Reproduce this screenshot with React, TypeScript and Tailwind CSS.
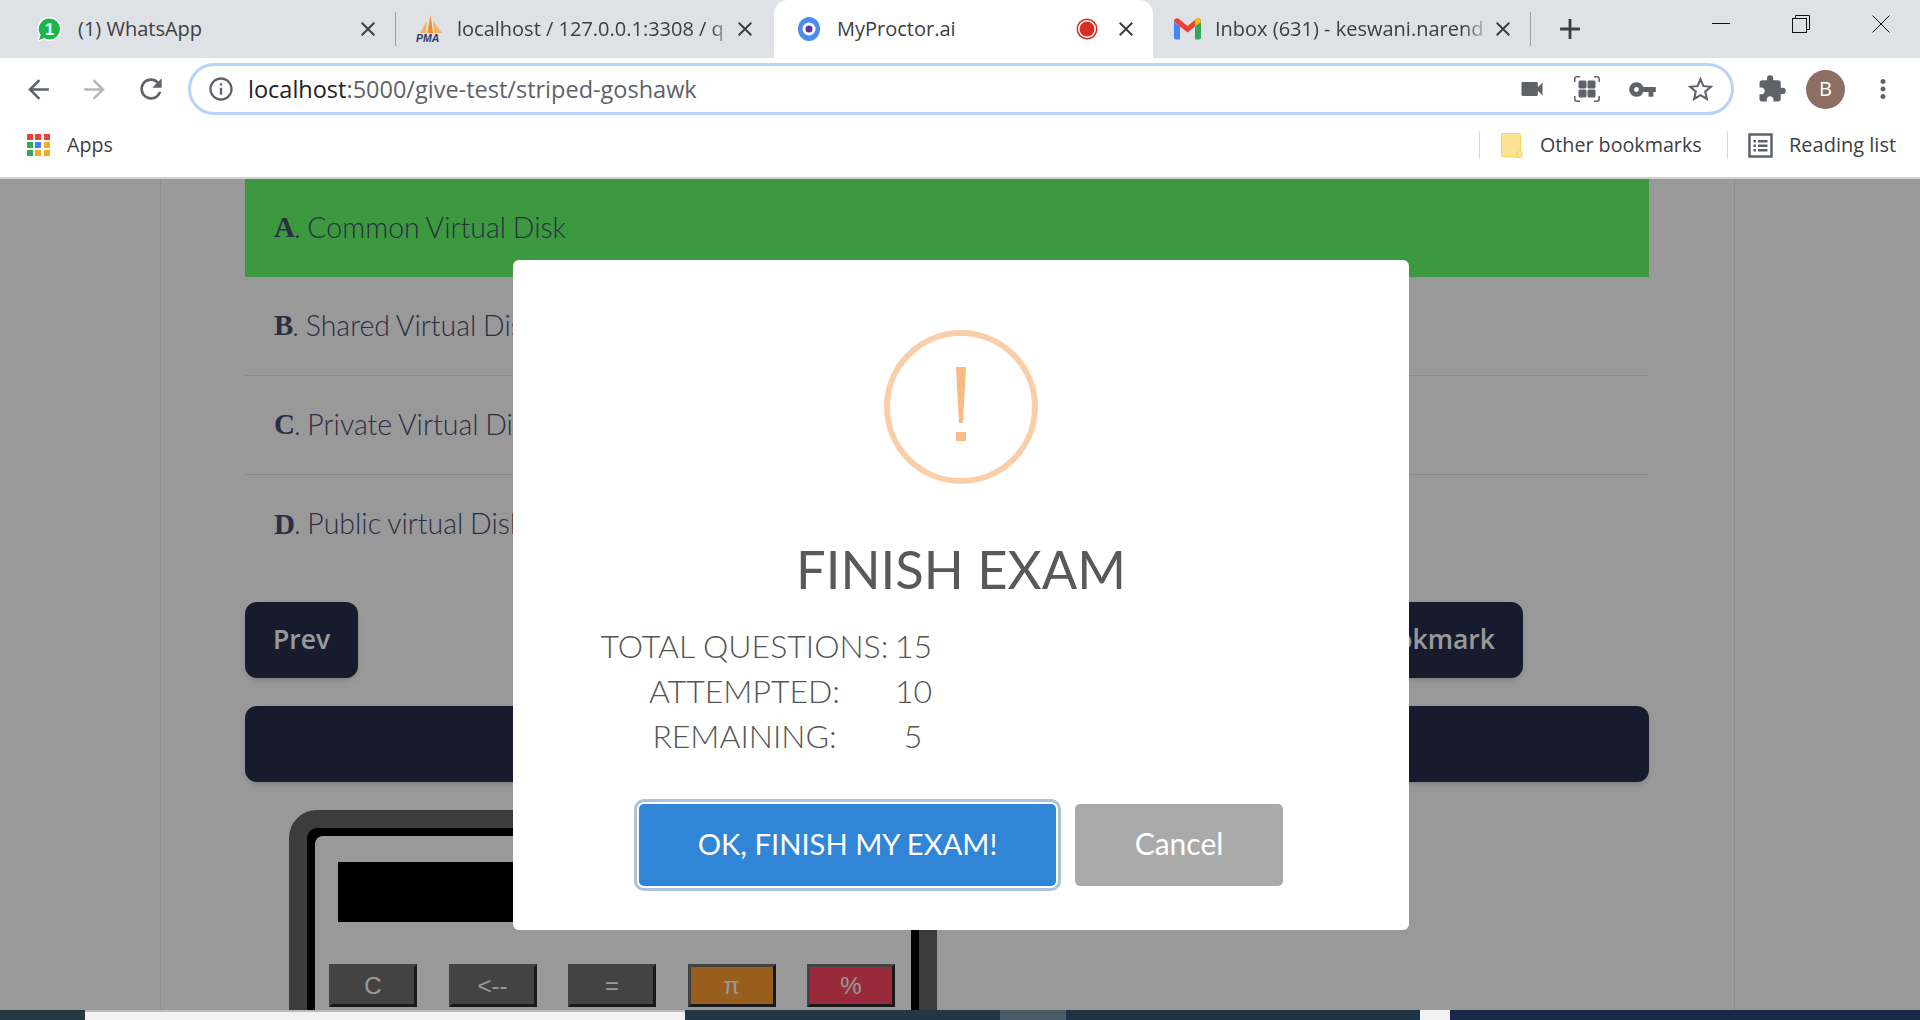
import React from "react";
import {
  MdArrowBack,
  MdArrowForward,
  MdRefresh,
  MdInfoOutline,
  MdVideocam,
  MdVpnKey,
  MdStarBorder,
  MdExtension,
  MdMoreVert,
  MdClose,
  MdAdd,
} from "react-icons/md";

const chromeFont = "font-['Open_Sans','Noto_Sans',sans-serif]";

function WhatsAppIcon() {
  return (
    <svg width="26" height="27" viewBox="0 0 26 27">
      <path d="M13.500 1a12 12 0 0 1 0 24c-2 0-3.800-.5-5.400-1.400L.8 26l2.400-6.400A12 12 0 0 1 13.500 1z" fill="#fff" />
      <path d="M13.500 2.500a10.500 10.500 0 0 1 0 21c-1.900 0-3.700-.5-5.200-1.400L3 24l1.700-5A10.500 10.500 0 0 1 13.500 2.500z" fill="#16b84a" />
      <text x="13.500" y="19" textAnchor="middle" fontSize="17" fontWeight="700" fill="#fff" fontFamily="Liberation Sans">1</text>
    </svg>
  );
}

function PmaIcon() {
  return (
    <svg width="28" height="28" viewBox="0 0 28 28">
      <path d="M4 18 L11 6 L10 18 Z" fill="#f7b35c" />
      <path d="M11.500 18 L14.500 0 L17 18 Z" fill="#f28c28" />
      <path d="M18 18 L17 6 L26 18 Z" fill="#f7b35c" />
      <text x="0" y="27" fontSize="10.500" fontWeight="700" fontStyle="italic" fill="#2b3a6b" fontFamily="Liberation Sans">PMA</text>
    </svg>
  );
}

function ProctorIcon() {
  return (
    <svg width="24" height="24" viewBox="0 0 24 24">
      <ellipse cx="12" cy="12" rx="11" ry="12" fill="#4a8cf0" />
      <circle cx="12" cy="12" r="6.500" fill="#fff" />
      <circle cx="12" cy="12" r="3.500" fill="#5b2fa8" />
    </svg>
  );
}

function RecIcon() {
  return (
    <svg width="22" height="22" viewBox="0 0 22 22">
      <circle cx="11" cy="11" r="10.500" fill="#d93025" />
      <circle cx="11" cy="11" r="9" fill="#fff" />
      <circle cx="11" cy="11" r="7.500" fill="#d93025" />
    </svg>
  );
}

function GmailIcon() {
  return (
    <svg width="27" height="22" viewBox="0 0 27 22">
      <path d="M0 4 L0 19.500 A2 2 0 0 0 2 21.500 L6 21.500 L6 8.500 Z" fill="#4285f4" />
      <path d="M21 8.500 L21 21.500 L25 21.500 A2 2 0 0 0 27 19.500 L27 4 Z" fill="#34a853" />
      <path d="M0 3.500 C0 .5 3 -.5 5 1 L13.500 8 L22 1 C24 -.5 27 .5 27 3.500 L21 8.500 L13.500 14.500 L6 8.500 Z" fill="#ea4335" />
      <path d="M21 8.500 L21 2.500 L22 1 C24 -.5 27 .5 27 3.500 Z" fill="#fbbc04" />
    </svg>
  );
}

function TabClose() {
  return <MdClose size={24} className="text-[#3c4043] shrink-0" />;
}

function AppsIcon() {
  const colors = ["#ef4136", "#ef4136", "#ef4136", "#34a853", "#4285f4", "#f9a825", "#34a853", "#f9a825", "#f9a825"];
  return (
    <div className="grid grid-cols-3 gap-[2px] w-[23px]">
      {colors.map((c, i) => (
        <svg key={i} width="6" height="6" viewBox="0 0 6 6">
          <rect width="6" height="6" fill={c} />
        </svg>
      ))}
    </div>
  );
}

function FolderIcon() {
  return (
    <svg width="22" height="25" viewBox="0 0 22 25">
      <rect x=".5" y=".5" width="19" height="23.500" rx="1" fill="#fde293" stroke="#f9d35c" />
      <rect x="16" y="17" width="5" height="7.500" rx="1.500" fill="#fde293" stroke="#f9d35c" />
    </svg>
  );
}

function ReadingIcon() {
  return (
    <svg width="25" height="25" viewBox="0 0 25 25" fill="none">
      <rect x="1.500" y="1.500" width="22" height="22" stroke="#5f6368" strokeWidth="2.500" />
      <rect x="5.500" y="7" width="2.500" height="2.500" fill="#5f6368" />
      <rect x="5.500" y="11.500" width="2.500" height="2.500" fill="#5f6368" />
      <rect x="5.500" y="16" width="2.500" height="2.500" fill="#5f6368" />
      <rect x="10" y="7" width="9.500" height="2.500" fill="#5f6368" />
      <rect x="10" y="11.500" width="9.500" height="2.500" fill="#5f6368" />
      <rect x="10" y="16" width="9.500" height="2.500" fill="#5f6368" />
    </svg>
  );
}

function QrIcon() {
  return (
    <svg width="26" height="26" viewBox="0 0 26 26" fill="none">
      <path d="M6 .8H3a2.200 2.200 0 0 0-2.200 2.200V6M20 .8h3a2.200 2.200 0 0 1 2.200 2.200V6M6 25.200H3A2.200 2.200 0 0 1 .8 23V20M20 25.200h3a2.200 2.200 0 0 0 2.200-2.200V20" stroke="#5f6368" strokeWidth="1.500" />
      <rect x="4.500" y="4.500" width="8" height="8" rx="1.500" fill="#5f6368" />
      <rect x="13.500" y="4.500" width="8" height="8" rx="1.500" fill="#5f6368" />
      <rect x="4.500" y="13.500" width="8" height="8" rx="1.500" fill="#5f6368" />
      <rect x="13.500" y="13.500" width="8" height="8" rx="1.500" fill="#5f6368" />
    </svg>
  );
}

function WinMin() {
  return (
    <svg width="18" height="18" viewBox="0 0 18 18">
      <path d="M0 8.500H18" stroke="#111" strokeWidth="1" />
    </svg>
  );
}
function WinRestore() {
  return (
    <svg width="18" height="18" viewBox="0 0 18 18" fill="none">
      <rect x=".5" y="3.500" width="14" height="14" stroke="#111" />
      <path d="M3.500 3.500V.5H17.500V14.500H14.500" stroke="#111" />
    </svg>
  );
}
function WinClose() {
  return (
    <svg width="18" height="18" viewBox="0 0 18 18">
      <path d="M.5.5L17.500 17.500M17.500.5L.5 17.500" stroke="#111" strokeWidth="1" />
    </svg>
  );
}

function TabStrip() {
  return (
    <div className={`h-[58px] bg-[#dee1e6] flex items-stretch shrink-0 ${chromeFont}`}>
      <div className="w-[395px] flex items-center pl-[36px] shrink-0">
        <WhatsAppIcon />
        <span className="ml-[16px] text-[20px] text-[#3c4043] w-[278px] shrink-0">(1) WhatsApp</span>
        <TabClose />
      </div>
      <div className="w-px my-[12px] bg-[#9aa0a6] shrink-0" />
      <div className="w-[378px] flex items-center pl-[20px] shrink-0">
        <PmaIcon />
        <span className="ml-[13px] text-[20px] text-[#3c4043] w-[276px] shrink-0 whitespace-nowrap overflow-hidden [mask-image:linear-gradient(to_right,black_92%,transparent)]">localhost / 127.0.0.1:3308 / q</span>
        <TabClose />
      </div>
      <div className="w-[379px] flex items-center pl-[23px] shrink-0 bg-white rounded-t-[14px]">
        <ProctorIcon />
        <span className="ml-[16px] text-[20px] text-[#3c4043] w-[239px] shrink-0">MyProctor.ai</span>
        <RecIcon />
        <span className="w-[16px]" />
        <TabClose />
      </div>
      <div className="w-[377px] flex items-center pl-[21px] shrink-0">
        <GmailIcon />
        <span className="ml-[14px] text-[20px] text-[#3c4043] w-[276px] shrink-0 whitespace-nowrap overflow-hidden [mask-image:linear-gradient(to_right,black_90%,transparent)]">Inbox (631) - keswani.narend</span>
        <TabClose />
      </div>
      <div className="w-px my-[12px] bg-[#9aa0a6] shrink-0" />
      <div className="flex items-center pl-[22px] shrink-0">
        <MdAdd size={34} className="text-[#3c4043]" />
      </div>
      <div className="flex-1 flex justify-end items-start pt-[15px] pr-[30px] gap-[62px]">
        <WinMin />
        <WinRestore />
        <WinClose />
      </div>
    </div>
  );
}

function Toolbar() {
  return (
    <div className={`h-[62px] bg-white flex items-center shrink-0 pl-[23px] ${chromeFont}`}>
      <MdArrowBack size={31} className="text-[#5f6368] shrink-0" />
      <MdArrowForward size={31} className="text-[#b4b7bb] shrink-0 ml-[25px]" />
      <MdRefresh size={32} className="text-[#5f6368] shrink-0 ml-[25px]" />
      <div className="ml-[21px] w-[1546px] h-[52px] border-[3px] border-[#b7d4f8] rounded-full flex items-center pl-[16px] pr-[15px] shrink-0">
        <MdInfoOutline size={28} className="text-[#5f6368] shrink-0" />
        <span className="ml-[13px] pt-px text-[23.500px] text-[#5f6368] flex-1">
          <span className="text-[#202124]">localhost</span>:5000/give-test/striped-goshawk
        </span>
        <div className="flex items-center gap-[28px]">
          <MdVideocam size={28} className="text-[#5f6368]" />
          <QrIcon />
          <MdVpnKey size={29} className="text-[#5f6368]" />
          <MdStarBorder size={31} className="text-[#5f6368]" />
        </div>
      </div>
      <MdExtension size={30} className="text-[#5f6368] shrink-0 ml-[23px]" />
      <div className="ml-[19px] w-[39px] h-[39px] rounded-full bg-[#8d6e63] text-white text-[20px] flex items-center justify-center shrink-0">B</div>
      <MdMoreVert size={30} className="text-[#5f6368] shrink-0 ml-[23px]" />
    </div>
  );
}

function BookmarksBar() {
  return (
    <div className={`h-[59px] bg-white flex items-center shrink-0 pl-[27px] pb-[7px] border-b-2 border-[#d0d0d0] ${chromeFont}`}>
      <AppsIcon />
      <span className="ml-[17px] text-[19.700px] text-[#3c4043]">Apps</span>
      <div className="ml-auto w-px h-[28px] bg-[#d5d7da]" />
      <span className="ml-[21px]"><FolderIcon /></span>
      <span className="ml-[17px] text-[19.700px] text-[#3c4043] w-[187px] whitespace-nowrap">Other bookmarks</span>
      <div className="w-px h-[28px] bg-[#d5d7da]" />
      <span className="ml-[20px]"><ReadingIcon /></span>
      <span className="ml-[16px] text-[20px] text-[#3c4043] w-[131px] whitespace-nowrap">Reading list</span>
    </div>
  );
}

function OptionRow({ letter, text, tone }: { letter: string; text: string; tone: string }) {
  return (
    <div className={`flex items-center shrink-0 pl-[29px] text-[#4a4d72] ${tone}`}>
      <b className="font-['Liberation_Serif',serif] font-bold text-[29px]">{letter}</b>
      <span className="-ml-[1px] font-['Lato',sans-serif] font-light text-[28.500px] [word-spacing:-1px] -translate-y-px">. {text}</span>
    </div>
  );
}

function CalcKey({ label, tone }: { label: string; tone: string }) {
  return (
    <button className={`w-[88px] h-[43px] shrink-0 border-[3px] border-t-[#717171] border-l-[#717171] border-r-[#2b2b2b] border-b-[#2b2b2b] text-white text-[24px] font-['Liberation_Sans',sans-serif] leading-none ${tone}`}>
      {label}
    </button>
  );
}

function Calculator() {
  return (
    <div className="mt-[28px] ml-[44px] w-[648px] h-[520px] shrink-0 border-[18px] border-[#646464] rounded-[28px] bg-black p-[8px]">
      <div className="h-full bg-white rounded-[8px] pt-[26px] px-[14px]">
        <div className="ml-[9px] w-[550px] h-[60px] bg-black" />
        <div className="mt-[42px] flex gap-[31.500px]">
          <CalcKey label="C" tone="bg-[#717171]" />
          <CalcKey label="<--" tone="bg-[#717171]" />
          <CalcKey label="=" tone="bg-[#717171]" />
          <CalcKey label="π" tone="bg-[#ff9b32]" />
          <CalcKey label="%" tone="bg-[#ff4665]" />
        </div>
      </div>
    </div>
  );
}

function ExamPage() {
  const btn = "h-[76px] px-[28px] bg-[#252d4d] text-white rounded-[12px] text-[26.500px] font-semibold font-['Open_Sans',sans-serif] shadow-md";
  return (
    <div className="ml-[160px] w-[1575px] h-full border-x border-[#ececec] pl-[84px] pr-[85px] flex flex-col">
      <OptionRow letter="A" text="Common Virtual Disk" tone="h-[98px] bg-[#65ff6b]" />
      <OptionRow letter="B" text="Shared Virtual Disk" tone="h-[99px] border-b border-[#e6e6e6]" />
      <OptionRow letter="C" text="Private Virtual Disk" tone="h-[99px] border-b border-[#e6e6e6]" />
      <OptionRow letter="D" text="Public virtual Disk" tone="h-[99px]" />
      <div className="mt-[28px] flex justify-between pr-[126px] shrink-0">
        <button className={btn}>Prev</button>
        <button className={btn}>Bookmark</button>
      </div>
      <div className="mt-[28px] h-[76px] shrink-0 bg-[#252d4d] rounded-[12px] shadow-md" />
      <Calculator />
    </div>
  );
}

function FinishModal() {
  const rows: [string, string][] = [
    ["TOTAL QUESTIONS:", "15"],
    ["ATTEMPTED:", "10"],
    ["REMAINING:", "5"],
  ];
  return (
    <div className="absolute inset-0 bg-black/40">
      <div className="absolute left-[513px] top-[81px] w-[896px] h-[670px] bg-white rounded-[6px] flex flex-col items-center pt-[70px] font-['Lato',sans-serif]">
        <svg width="154" height="154" viewBox="0 0 154 154" className="shrink-0">
          <circle cx="77" cy="77" r="74" fill="none" stroke="#facea8" strokeWidth="6" />
          <polygon points="72,37 82,37 79,93 75,93" fill="#f8bb86" />
          <rect x="72" y="102" width="10" height="9" fill="#f8bb86" />
        </svg>
        <h2 className="mt-[55px] h-[60px] leading-[60px] text-[52.500px] text-[#595959] font-normal">FINISH EXAM</h2>
        <div className="mt-[24px] self-start ml-[87px] grid grid-cols-[289px_36px] gap-x-[6px] text-center text-[32px] font-light leading-[45px] text-[#545454]">
          {rows.map(([k, v]) => (
            <React.Fragment key={k}>
              <span className="whitespace-nowrap">{k}</span>
              <span>{v}</span>
            </React.Fragment>
          ))}
        </div>
        <div className="mt-[46px] flex gap-[19px]">
          <button className="w-[417px] h-[82px] pb-[3px] rounded-[5px] bg-[#3085d6] text-white text-[29.200px] shadow-[0_0_0_2px_#fff,0_0_0_5px_#a9c3dc]">OK, FINISH MY EXAM!</button>
          <button className="w-[208px] h-[82px] pb-[3px] rounded-[5px] bg-[#aaaaaa] text-white text-[30px]">Cancel</button>
        </div>
      </div>
    </div>
  );
}

function Taskbar() {
  return (
    <div className="h-[10px] flex shrink-0">
      <div className="w-[85px] bg-[#24383f]" />
      <div className="w-[600px] bg-[#f2f2f2] border-t-2 border-[#bbbbbb]" />
      <div className="w-[315px] bg-[#213742]" />
      <div className="w-[66px] bg-[#4a5d66]" />
      <div className="w-[354px] bg-[#1e3444]" />
      <div className="w-[30px] bg-[#f2f2f2]" />
      <div className="flex-1 bg-[#19294a]" />
    </div>
  );
}

export default function App() {
  return (
    <div className="h-[1020px] w-[1920px] overflow-hidden flex flex-col bg-white">
      <TabStrip />
      <Toolbar />
      <BookmarksBar />
      <main className="relative flex-1 min-h-0 overflow-hidden">
        <ExamPage />
        <FinishModal />
      </main>
      <Taskbar />
    </div>
  );
}
